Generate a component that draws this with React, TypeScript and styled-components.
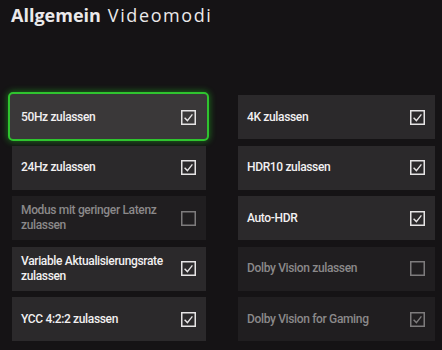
import React from "react";
import styled, { createGlobalStyle, css } from "styled-components";

const Global = createGlobalStyle`
  html, body { margin: 0; padding: 0; background: #151315; }
  body { width: 442px; height: 350px; overflow: hidden; font-family: "Open Sans", "Noto Sans", sans-serif; }
`;

const Page = styled.div`
  width: 442px;
  height: 350px;
  box-sizing: border-box;
  padding: 2px 0 0 11px;
  background: #151315;
  display: flex;
  flex-direction: column;
`;

const Title = styled.h1`
  margin: 0;
  font-size: 18px;
  line-height: 26px;
  font-weight: 400;
  color: #ebe9ea;
  display: flex;
  gap: 7px;
`;

const Strong = styled.span`
  font-weight: 700;
`;

const Light = styled.span`
  letter-spacing: 1.6px;
`;

const Grid = styled.div`
  margin-top: 67px;
  margin-left: 1px;
  display: grid;
  grid-template-columns: 194px 197px;
  column-gap: 32px;
`;

const Column = styled.div`
  display: flex;
  flex-direction: column;
  gap: 6.5px;
`;

const Tile = styled.div<{ $disabled?: boolean; $focused?: boolean }>`
  position: relative;
  height: 44px;
  box-sizing: border-box;
  padding: 0 10px 0 9px;
  display: flex;
  align-items: center;
  justify-content: space-between;
  gap: 8px;
  background: ${(p) => (p.$disabled ? "#201e20" : "#2b292b")};
  color: ${(p) => (p.$disabled ? "#8b898a" : "#f2f0f1")};
  ${(p) =>
    p.$focused &&
    css`
      background: transparent;
      &::before {
        content: "";
        position: absolute;
        inset: -3px -3px -2px -4px;
        background: #3a3839;
        border: 2.5px solid #2fc42f;
        border-radius: 5px;
        box-shadow: 0 0 6px 1px rgba(40, 200, 40, 0.45);
        z-index: 0;
      }
    `}
`;

const Label = styled.span`
  position: relative;
  z-index: 1;
  font-family: Roboto, "Liberation Sans", sans-serif;
  font-size: 12px;
  line-height: 15px;
  font-weight: 500;
  letter-spacing: -0.35px;
  white-space: nowrap;
`;

const Box = styled.svg`
  position: relative;
  z-index: 1;
  flex: none;
  width: 15px;
  height: 15px;
`;

function Check({ checked, disabled }: { checked: boolean; disabled?: boolean }) {
  const c = disabled ? "#7d7b7c" : "#e6e4e5";
  return (
    <Box viewBox="0 0 15 15">
      <rect x="0.75" y="0.75" width="13.5" height="13.5" fill="none" stroke={c} strokeWidth="1.5" />
      {checked && (
        <polyline points="3.6,7.8 6.4,10.6 11.4,4.4" fill="none" stroke={c} strokeWidth="1.4" strokeLinejoin="miter" />
      )}
    </Box>
  );
}

type Item = { label: React.ReactNode; checked: boolean; disabled?: boolean; focused?: boolean };

const left: Item[] = [
  { label: "50Hz zulassen", checked: true, focused: true },
  { label: "24Hz zulassen", checked: true },
  { label: <>Modus mit geringer Latenz<br />zulassen</>, checked: false, disabled: true },
  { label: <>Variable Aktualisierungsrate<br />zulassen</>, checked: true },
  { label: "YCC 4:2:2 zulassen", checked: true },
];

const right: Item[] = [
  { label: "4K zulassen", checked: true },
  { label: "HDR10 zulassen", checked: true },
  { label: "Auto-HDR", checked: true },
  { label: "Dolby Vision zulassen", checked: false, disabled: true },
  { label: "Dolby Vision for Gaming", checked: true, disabled: true },
];

function Col({ items }: { items: Item[] }) {
  return (
    <Column>
      {items.map((it, i) => (
        <Tile key={i} $disabled={it.disabled} $focused={it.focused}>
          <Label>{it.label}</Label>
          <Check checked={it.checked} disabled={it.disabled} />
        </Tile>
      ))}
    </Column>
  );
}

export default function App() {
  return (
    <>
      <Global />
      <Page>
        <Title>
          <Strong>Allgemein</Strong>
          <Light>Videomodi</Light>
        </Title>
        <Grid>
          <Col items={left} />
          <Col items={right} />
        </Grid>
      </Page>
    </>
  );
}
